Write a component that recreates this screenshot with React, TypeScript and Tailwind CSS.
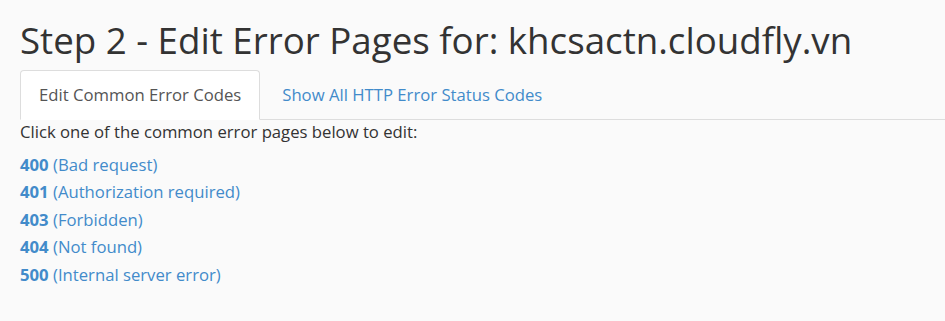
const codes = [
  { code: "400", label: "(Bad request)" },
  { code: "401", label: "(Authorization required)" },
  { code: "403", label: "(Forbidden)" },
  { code: "404", label: "(Not found)" },
  { code: "500", label: "(Internal server error)" },
];

export default function App() {
  return (
    <div className="min-h-[321px] bg-[#fafafa] px-5 pt-[14px] font-['Open_Sans',sans-serif] text-[#333]">
      <h1 className="text-[36.7px] leading-[52px] font-normal">
        Step 2 - Edit Error Pages for: khcsactn.cloudfly.vn
      </h1>
      <div className="-mr-5 mt-[4px] flex border-b border-[#ddd]">
        <button className="-mb-px h-[50px] rounded-t border border-[#ddd] border-b-white bg-white px-[18px] text-[16.7px] text-[#555]">
          Edit Common Error Codes
        </button>
        <button className="-mb-px h-[50px] px-[22px] text-[16.7px] text-[#428bca]">
          Show All HTTP Error Status Codes
        </button>
      </div>
      <p className="mt-[1px] text-[16.7px] leading-[22px]">
        Click one of the common error pages below to edit:
      </p>
      <ul className="mt-[8px] flex flex-col">
        {codes.map((c) => (
          <li key={c.code} className="text-[16.7px] leading-[27.4px] text-[#428bca]">
            <a href="#">
              <span className="font-bold">{c.code}</span> {c.label}
            </a>
          </li>
        ))}
      </ul>
    </div>
  );
}
